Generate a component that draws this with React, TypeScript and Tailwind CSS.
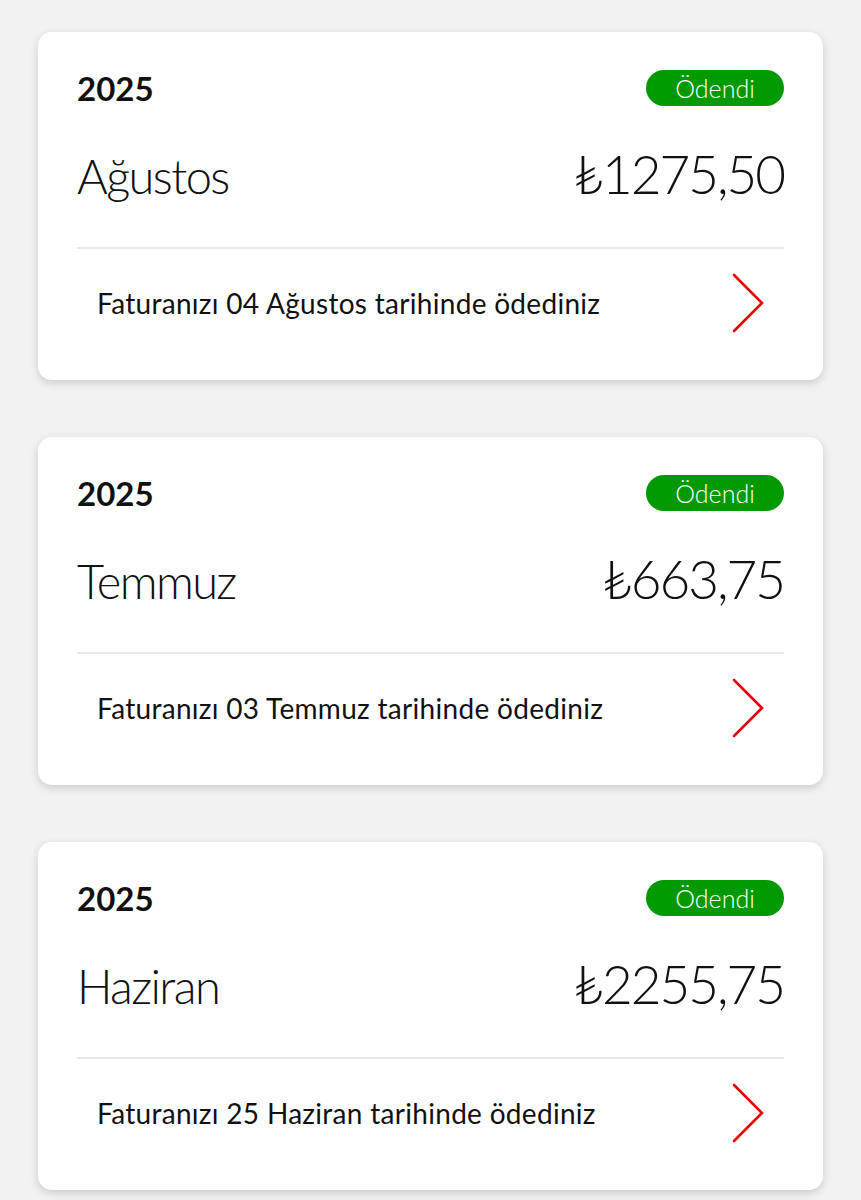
import React from "react";

type Bill = { year: string; month: string; amount: string; note: string };

const bills: Bill[] = [
  { year: "2025", month: "Ağustos", amount: "₺1275,50", note: "Faturanızı 04 Ağustos tarihinde ödediniz" },
  { year: "2025", month: "Temmuz", amount: "₺663,75", note: "Faturanızı 03 Temmuz tarihinde ödediniz" },
  { year: "2025", month: "Haziran", amount: "₺2255,75", note: "Faturanızı 25 Haziran tarihinde ödediniz" },
];

function Chevron() {
  return (
    <svg width="32" height="60" viewBox="0 0 32 60" fill="none">
      <path d="M2 2 L30 30 L2 58" stroke="#e60000" strokeWidth="2.6" strokeLinecap="round" strokeLinejoin="miter" />
    </svg>
  );
}

function Card({ b }: { b: Bill }) {
  return (
    <div className="bg-white rounded-[14px] shadow-[0_3px_8px_rgba(0,0,0,0.16)] h-[348px] px-[39px] pt-[38px] flex flex-col">
      <div className="flex items-center justify-between h-[36px]">
        <span className="text-[33px] font-bold text-[#111] leading-none">{b.year}</span>
        <span className="bg-[#009a00] text-white rounded-full w-[138px] h-[36px] flex items-center justify-center text-[25px] font-light leading-none">
          Ödendi
        </span>
      </div>
      <div className="flex items-baseline justify-between mt-[41px] h-[72px]">
        <span className="text-[47px] font-light text-[#111] leading-none tracking-[-1.6px]">{b.month}</span>
        <span className="text-[53px] font-light text-[#111] leading-none tracking-[-2px]">{b.amount}</span>
      </div>
      <div className="h-[2px] bg-[#e8e8e8] mt-[28px]" />
      <div className="flex items-center justify-between pl-[20px] pr-[20px] mt-[24px] h-[60px]">
        <span className="text-[28px] text-[#111] leading-none tracking-[0.3px]">{b.note}</span>
        <Chevron />
      </div>
    </div>
  );
}

export default function App() {
  return (
    <div className="min-h-[1200px] bg-[#f2f2f2] px-[38px] pt-[32px] flex flex-col gap-[57px]" style={{ fontFamily: "Lato, 'Noto Sans', sans-serif" }}>
      {bills.map((b, i) => (
        <Card key={i} b={b} />
      ))}
    </div>
  );
}
